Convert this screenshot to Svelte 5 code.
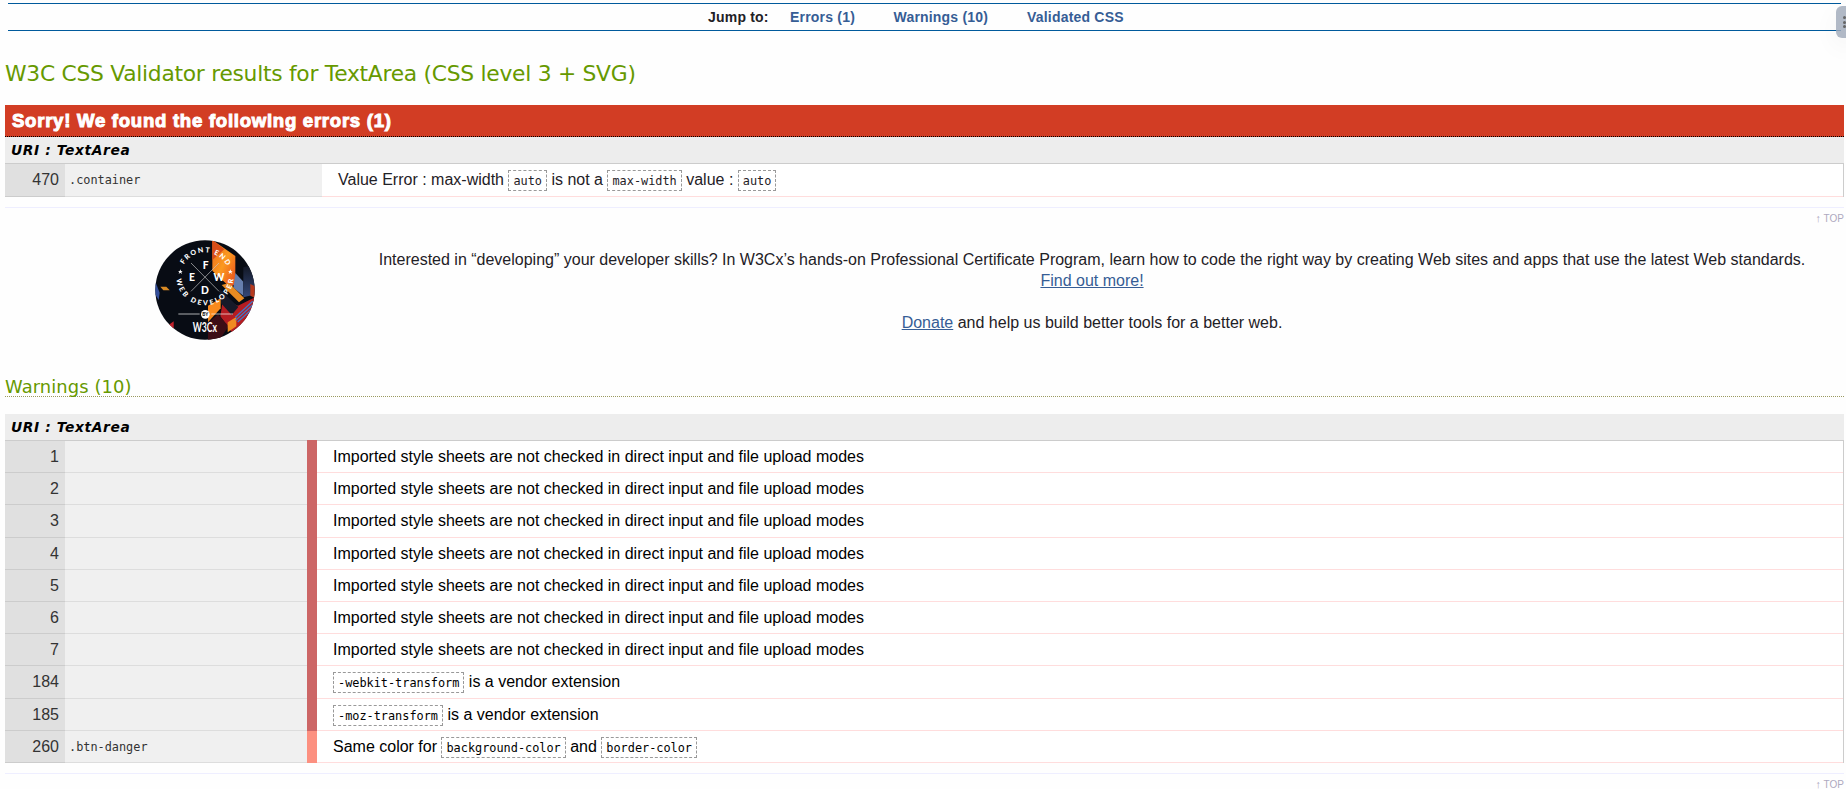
<script>
  const imported = 'Imported style sheets are not checked in direct input and file upload modes';
  const warnings = [
    ...[1, 2, 3, 4, 5, 6, 7].map((line) => ({ line, context: '', level: 0, parts: [imported] })),
    { line: 184, context: '', level: 0, parts: [{ code: '-webkit-transform' }, ' is a vendor extension'] },
    { line: 185, context: '', level: 0, parts: [{ code: '-moz-transform' }, ' is a vendor extension'] },
    {
      line: 260, context: '.btn-danger', level: 1,
      parts: ['Same color for ', { code: 'background-color' }, ' and ', { code: 'border-color' }]
    }
  ];
  const errors = [
    {
      line: 470, context: '.container',
      parts: ['Value Error : max-width ', { code: 'auto' }, ' is not a ', { code: 'max-width' }, ' value : ', { code: 'auto' }]
    }
  ];
</script>

{#snippet message(parts)}{#each parts as part}{#if part.code}<code>{part.code}</code>{:else}<span class="txt">{part}</span>{/if}{/each}{/snippet}

<div class="page">
  <nav>
    <strong>Jump to:</strong>
    <a class="j1" href="#errors">Errors (1)</a>
    <a class="j2" href="#warnings">Warnings (10)</a>
    <a class="j3" href="#css">Validated CSS</a>
  </nav>

  <h2><span>W3C CSS Validator results for TextArea (CSS level 3 + SVG)</span></h2>

  <section id="errors">
    <h3 class="invalid"><span>Sorry! We found the following errors (1)</span></h3>
    <h4>URI : TextArea</h4>
    <div class="rows">
      {#each errors as row}
        <div class="row error">
          <div class="line">{row.line}</div>
          <div class="context">{row.context}</div>
          <div class="message">{@render message(row.parts)}</div>
        </div>
      {/each}
    </div>
    <div class="top"><a href="#top"><b>↑</b> TOP</a></div>
  </section>

  <aside class="promo">
    <svg class="badge" viewBox="44 43 300 300" width="100" height="100">
      <defs>
        <clipPath id="disc"><circle cx="194" cy="193" r="149" /></clipPath>
        <linearGradient id="flame" x1="0" y1="0" x2="1" y2="1">
          <stop offset="0" stop-color="#e9641c" /><stop offset=".5" stop-color="#fb9a20" /><stop offset="1" stop-color="#e8471d" />
        </linearGradient>
        <linearGradient id="steel" x1="0" y1="0" x2="0" y2="1">
          <stop offset="0" stop-color="#10141f" /><stop offset="1" stop-color="#34487a" />
        </linearGradient>
        <path id="arcTop" d="M121 153a73 73 0 0 1 146 0" />
        <path id="arcBottom" d="M108 153a86 86 0 0 0 172 0" />
      </defs>
      <g clip-path="url(#disc)">
        <rect x="44" y="43" width="300" height="300" fill="#080c14" />
        <path d="M216 43l69 48v84l-16 10-53-50z" fill="url(#flame)" />
        <path d="M216 43l36 28-36 32z" fill="#d84d18" />
        <path d="M285 142l24 26v42l-30-24z" fill="#667eae" />
        <path d="M309 125l40-10v90l-40 10z" fill="url(#steel)" />
        <path d="M266 172l46 46-16 12-52-52z" fill="#e88b22" />
        <path d="M330 175l20 10v35l-20-10z" fill="#b73a1d" />
        <path d="M248 220l45 20 56-28v66l-67 52-42-58z" fill="#b51d22" />
        <path d="M238 190l56 54-20 24-36-40z" fill="#171a29" />
        <path d="M203 240l38-22v30l-38 42z" fill="#f98a1c" />
        <path d="M203 292l30-26 32 36-30 44h-32z" fill="#3d0e16" />
        <path d="M262 290l26-16v28l-26 18z" fill="#f08b22" />
        <path d="M285 275l52-48M286 284l54-49M292 289l44-40" stroke="#4474c4" stroke-width="4" />
        <path d="M44 165l14 36-3 22-11-18z" fill="#344f9b" />
        <path d="M60 183h18l10 11H69z" fill="#d98a24" />
        <path d="M78 303l22-16v22z" fill="#c3202a" />
      </g>
      <path d="M152 112l84 85M236 112l-84 85" stroke="#c9c9c9" stroke-width="2" />
      <g fill="#fff" font-family="Lato, sans-serif" font-weight="900">
        <g font-size="31" text-anchor="middle">
          <text x="196" y="130">F</text><text x="155" y="165">E</text>
          <text x="236" y="165">W</text><text x="194" y="204">D</text>
        </g>
        <g font-size="21">
          <text><textPath href="#arcTop" startOffset="38" textLength="157">FRONT END</textPath></text>
          <text><textPath href="#arcBottom" startOffset="8" textLength="254">WEB DEVELOPER</textPath></text>
        </g>
        <path d="M120 131l2 5h5l-4 3 2 6-5-4-5 4 2-6-4-3h5zM270 131l2 5h5l-4 3 2 6-5-4-5 4 2-6-4-3h5z" />
        <path d="M114 265h64M213 265h65" stroke="#fff" stroke-width="2" />
        <circle cx="195" cy="266" r="13" />
        <text x="195" y="271" font-size="14" text-anchor="middle" fill="#111">BY</text>
        <text x="157" y="320" font-size="39" font-weight="700" textLength="73" lengthAdjust="spacingAndGlyphs">W3Cx</text>
      </g>
    </svg>
    <div class="pitch">
      <p><span class="lead">Interested in “developing” your developer skills? In W3Cx’s hands-on Professional Certificate Program, learn how to code the right way by creating Web sites and apps that use the latest Web standards.</span><br /><a href="#more">Find out more!</a></p>
      <p><a href="#donate">Donate</a> and help us build better tools for a better web.</p>
    </div>
  </aside>

  <section id="warnings">
    <h3 class="heading">Warnings (10)</h3>
    <h4>URI : TextArea</h4>
    <div class="rows">
      {#each warnings as row}
        <div class="row warning" class:mild={row.level === 1}>
          <div class="line">{row.line}</div>
          <div class="context">{row.context}</div>
          <div class="message">{@render message(row.parts)}</div>
        </div>
      {/each}
    </div>
    <div class="top"><a href="#top"><b>↑</b> TOP</a></div>
  </section>

  <div class="handle"><i></i><i></i><i></i></div>
</div>

<style>
  :global(body) { background: #fff; overflow: hidden; }
  .page {
    box-sizing: border-box; position: relative; width: 1846px; height: 789px; overflow: hidden;
    padding: 3px 2px 0 5px; color: #1f2126; background: #fefefe;
    font: 16px/20.8px "Liberation Sans", Arial, sans-serif;
  }
  a { color: #365d95; }
  nav {
    box-sizing: border-box; height: 28px; margin: 0 3px; padding-left: 700px;
    display: flex; align-items: center; border: solid #005a9c; border-width: 1px 0;
    font-size: 14px; line-height: 26px; font-weight: 700; white-space: nowrap; letter-spacing: .2px;
  }
  nav strong { width: 82px; }
  nav a { text-decoration: none; }
  .j1 { width: 103.5px; }
  .j2 { width: 133.5px; }
  h2, h3, h4, p { margin: 0; }
  h2 {
    height: 74px; box-sizing: border-box; padding-top: 30px; color: #690; letter-spacing: -.27px;
    font: 400 21.8px/26px "DejaVu Sans", Verdana, sans-serif; white-space: nowrap;
  }
  .invalid {
    box-sizing: border-box; height: 32px; padding-left: 7px; border-bottom: 1px dotted #000;
    background: #d23d24; color: #fff; font-size: 18.6px; line-height: 32px; letter-spacing: .72px;
    -webkit-text-stroke: 1px #fff;
  }
  h4 {
    box-sizing: border-box; height: 26px; padding-left: 6px; background: #ededed; color: #000;
    font: italic 700 13.8px/26px "DejaVu Sans", Verdana, sans-serif; letter-spacing: .62px;
  }
  .rows { border: solid #ccc; border-width: 1px 1px 0 0; }
  .row { display: grid; grid-template-columns: 60px 257px 1fr; }
  .row > div { box-sizing: border-box; height: 32.2px; border-bottom: 1px solid #ddd; line-height: 31px; white-space: pre; }
  .row.error > div { height: 33px; }
  .warning { position: relative; grid-template-columns: 60px 242px 1fr; height: 32.2px; color: #000; }
  .row > .line { padding-right: 6px; text-align: right; background: #e0e0e0; color: #333; border-color: #ccc; }
  .row > .context {
    padding-left: 4px; background: #f0f0f0; color: #333;
    font: 11.87px/32px "DejaVu Sans Mono", monospace;
  }
  .row .message { padding-left: 16px; border-bottom-color: #fdd; background: #fff; }
  .row.warning .message { margin-left: 10px; }
  .warning::before {
    content: ""; position: absolute; left: 302px; top: 0; width: 10px; height: 100%; background: #c66;
  }
  .warning:first-child::before { top: -1px; height: calc(100% + 1px); }
  .mild::before { background: #fc9080; }
  code {
    display: inline-block; box-sizing: border-box; height: 21px; padding: 0 4px; border: 1px dashed #999;
    font: 11.87px/20px "DejaVu Sans Mono", monospace; vertical-align: baseline;
  }
  .top {
    margin-top: 10px; border-top: 1px solid #eef; height: 20px; text-align: right;
    font-size: 10px; line-height: 21px;
  }
  .top a { color: #aea9c0; text-decoration: none; }
  .top b { font-size: 11px; }
  .promo { display: flex; height: 147px; padding: 12px 0 0 150px; box-sizing: border-box; }
  .badge { flex: none; margin-top: -.5px; }
  .pitch { flex: 1; margin-left: 85px; padding-top: 10px; text-align: center; line-height: 20.9px; }
  .lead { white-space: nowrap; }
  .pitch p { margin-bottom: 21px; }
  .heading {
    box-sizing: border-box; height: 22px; margin-bottom: 17px; border-bottom: 1px dotted #9a9a60;
    color: #690; font: 400 17.9px/23px "DejaVu Sans", Verdana, sans-serif; letter-spacing: .1px;
  }
  .handle {
    position: absolute; left: 1836px; top: 6px; width: 20px; height: 32px; border-radius: 6px;
    background: rgba(160, 170, 186, .82); box-shadow: 0 8px 26px rgba(0, 0, 0, .05);
  }
  .handle i { display: block; width: 3px; height: 3px; margin: 1.5px 0 0 6.5px; border-radius: 50%; background: #666; }
  .handle i:first-child { margin-top: 10px; }
</style>
